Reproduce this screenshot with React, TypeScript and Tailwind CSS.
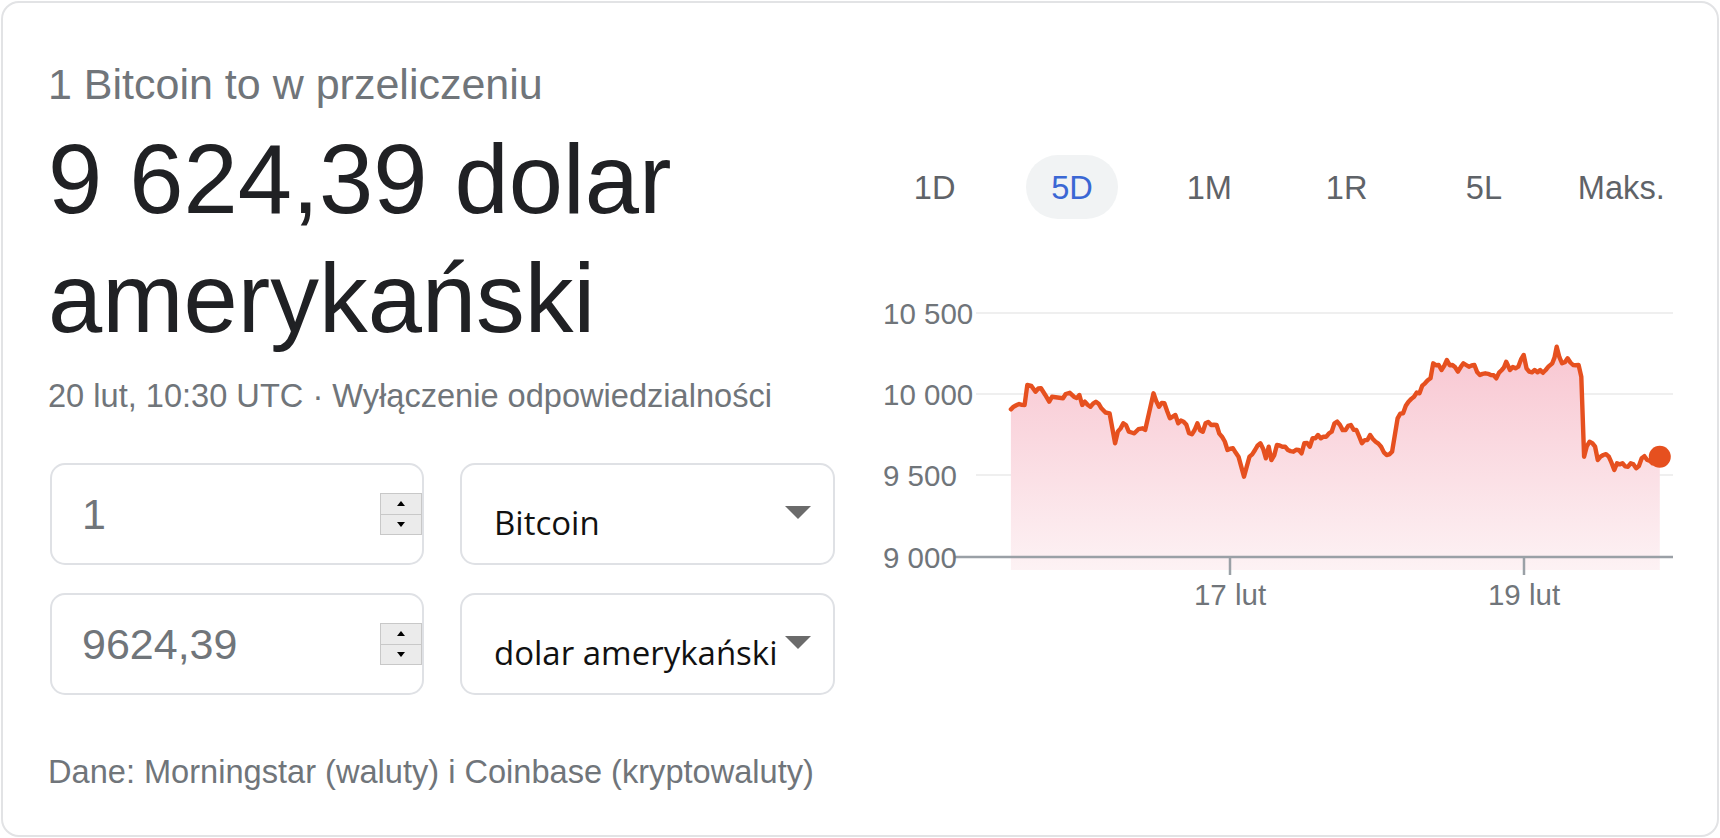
import React from "react";

const RAW: [number, number][] = [
  [275,478],[280,470],[290,462],[300,465],[305,405],[320,425],[330,415],[345,455],[350,440],[370,445],[375,432],[390,440],[400,435],[405,465],[410,455],[420,470],[430,455],[440,475],[455,490],[465,580],[470,545],[480,520],[490,545],[500,550],[515,535],[520,540],[535,430],[545,470],[555,460],[565,505],[575,495],[580,520],[590,515],[600,550],[610,540],[615,520],[625,545],[630,520],[640,525],[650,525],[660,560],[670,600],[680,595],[690,620],[700,680],[710,620],[720,600],[730,580],[740,625],[745,590],[750,630],[760,585],[770,590],[780,600],[790,605],[800,600],[805,610],[810,580],[820,590],[825,565],[835,555],[840,565],[850,560],[860,545],[865,520],[875,525],[885,540],[895,525],[905,540],[915,580],[925,570],[930,555],[940,575],[950,590],[960,615],[970,605],[980,505],[990,490],[1000,455],[1010,440],[1020,430],[1030,400],[1040,385],[1045,340],[1055,345],[1060,360],[1070,330],[1080,345],[1090,365],[1100,340],[1110,350],[1120,345],[1130,375],[1140,370],[1150,375],[1160,385],[1170,360],[1178,335],[1185,360],[1195,355],[1200,350],[1210,315],[1215,355],[1220,365],[1230,360],[1240,360],[1250,360],[1255,350],[1262,340],[1270,290],[1280,340],[1290,325],[1300,345],[1310,345],[1315,380],[1320,620],[1330,575],[1340,590],[1345,630],[1355,615],[1365,620],[1375,660],[1380,640],[1390,640],[1400,650],[1405,640],[1415,655],[1425,625],[1435,630],[1445,640],[1458,620]
];

function buildPoints(): [number, number][] {
  const base = RAW.map(([x, y]) => [x / 1.823 - 6, y / 3] as [number, number]);
  const out: [number, number][] = [];
  let seed = 7;
  const rnd = () => {
    seed = (seed * 9301 + 49297) % 233280;
    return seed / 233280 - 0.5;
  };
  for (let i = 0; i < base.length; i++) {
    const [x, y] = base[i];
    out.push([x, y]);
    if (i < base.length - 1) {
      const [nx, ny] = base[i + 1];
      const dx = nx - x;
      if (dx > 4 && Math.abs(ny - y) < 20) {
        const mx = x + dx / 2;
        const my = y + (ny - y) / 2 + rnd() * 6;
        out.push([mx, my]);
      }
    }
  }
  return out;
}

const PTS = buildPoints();

function Chart() {
  const line = PTS.map((p, i) => `${i === 0 ? "M" : "L"}${p[0].toFixed(1)} ${p[1].toFixed(1)}`).join(" ");
  const first = PTS[0];
  const last = PTS[PTS.length - 1];
  const area = `${line} L${last[0].toFixed(1)} 320 L${first[0].toFixed(1)} 320 Z`;
  const grid = [
    { y: 63, label: "10 500" },
    { y: 144, label: "10 000" },
    { y: 225, label: "9 500" },
  ];
  return (
    <svg width="824" height="380" viewBox="0 0 824 380" className="block">
      <defs>
        <linearGradient id="areaFill" x1="0" y1="0" x2="0" y2="1">
          <stop offset="0%" stopColor="#f8c6d1" />
          <stop offset="100%" stopColor="#fdf2f4" />
        </linearGradient>
      </defs>
      {grid.map((g) => (
        <g key={g.label}>
          <line x1="110" x2="807" y1={g.y} y2={g.y} stroke="#efefef" strokeWidth="2" />
          <text
            x="17"
            y={g.y + 10.5}
            fontFamily="'Liberation Sans', Arial, sans-serif"
            fontSize="29.5"
            fill="#70757a"
          >
            {g.label}
          </text>
        </g>
      ))}
      <path d={area} fill="url(#areaFill)" />
      <line x1="89" x2="807" y1="307" y2="307" stroke="#9aa0a6" strokeWidth="2.5" />
      <text x="17" y={317.5} fontFamily="'Liberation Sans', Arial, sans-serif" fontSize="29.5" fill="#70757a">
        9 000
      </text>
      <line x1="364" x2="364" y1="307" y2="325" stroke="#9aa0a6" strokeWidth="2.5" />
      <line x1="658" x2="658" y1="307" y2="325" stroke="#9aa0a6" strokeWidth="2.5" />
      <text x="364" y="355" textAnchor="middle" fontFamily="'Liberation Sans', Arial, sans-serif" fontSize="29.5" fill="#70757a">
        17 lut
      </text>
      <text x="658" y="355" textAnchor="middle" fontFamily="'Liberation Sans', Arial, sans-serif" fontSize="29.5" fill="#70757a">
        19 lut
      </text>
      <path d={line} fill="none" stroke="#e6501f" strokeWidth="4.4" strokeLinejoin="round" strokeLinecap="round" />
      <circle cx={last[0]} cy={last[1]} r="11" fill="#e6501f" />
    </svg>
  );
}

function Spinner() {
  return (
    <div className="flex h-[42px] w-[42px] flex-col border border-[#c8c8c8] bg-[#ebebeb]">
      <div className="flex flex-1 items-center justify-center border-b border-[#c8c8c8]">
        <div className="h-0 w-0 border-b-[5px] border-l-[4px] border-r-[4px] border-b-black border-l-transparent border-r-transparent" />
      </div>
      <div className="flex flex-1 items-center justify-center">
        <div className="h-0 w-0 border-t-[5px] border-l-[4px] border-r-[4px] border-t-black border-l-transparent border-r-transparent" />
      </div>
    </div>
  );
}

function NumberBox({ value }: { value: string }) {
  return (
    <div className="flex h-[102px] items-center rounded-[15px] border-2 border-[#dfe1e5] bg-white pl-[30px]">
      <span className="flex-1 text-[43px] leading-[50px] text-[#70757a]">{value}</span>
      <Spinner />
    </div>
  );
}

function SelectBox({ value }: { value: string }) {
  return (
    <div className="relative h-[102px] rounded-[15px] border-2 border-[#dfe1e5] bg-white pl-[32px] pt-[35px]">
      <span className="block whitespace-nowrap font-['Open_Sans','Noto_Sans',sans-serif] text-[33px] leading-[45px] text-[#111111]">
        {value}
      </span>
      <div className="absolute right-[22px] top-[41px] h-0 w-0 border-l-[13px] border-r-[13px] border-t-[13px] border-l-transparent border-r-transparent border-t-[#6b6b6b]" />
    </div>
  );
}

const TABS = ["1D", "5D", "1M", "1R", "5L", "Maks."];

export default function App() {
  return (
    <div className="h-[838px] w-[1720px] bg-white p-px font-['Liberation_Sans',Arial,sans-serif]">
      <div className="flex h-full rounded-[18px] border-2 border-[#e2e3e5] bg-white">
        <div className="w-[863px] shrink-0 pl-[45px] pt-[56px]">
          <div className="text-[43px] leading-[50px] text-[#70757a]">1 Bitcoin to w przeliczeniu</div>
          <div className="mt-[11px] text-[97.5px] leading-[119px] text-[#202124]">
            9 624,39 dolar
            <br />
            amerykański
          </div>
          <div className="mt-[18px] text-[32.6px] leading-[40px] text-[#70757a]">
            20 lut, 10:30 UTC · Wyłączenie odpowiedzialności
          </div>
          <div className="ml-[2px] mt-[47px] grid grid-cols-[374px_375px] gap-x-[36px] gap-y-[28px]">
            <NumberBox value="1" />
            <SelectBox value="Bitcoin" />
            <NumberBox value="9624,39" />
            <SelectBox value="dolar amerykański" />
          </div>
          <div className="mt-[56.7px] text-[32.6px] leading-[40px] text-[#70757a]">
            Dane: Morningstar (waluty) i Coinbase (kryptowaluty)
          </div>
        </div>
        <div className="w-[824px] shrink-0 pt-[152px]">
          <div className="flex h-[64px]">
            {TABS.map((t) => (
              <div key={t} className="flex flex-1 items-center justify-center">
                {t === "5D" ? (
                  <div className="flex h-[64px] w-[92px] items-center justify-center rounded-full bg-[#f1f3f4] pt-[3px] text-[32.6px] text-[#3b67d4]">
                    {t}
                  </div>
                ) : (
                  <div className="pt-[3px] text-[32.6px] text-[#5f6368]">{t}</div>
                )}
              </div>
            ))}
          </div>
          <div className="mt-[31px]">
            <Chart />
          </div>
        </div>
      </div>
    </div>
  );
}
